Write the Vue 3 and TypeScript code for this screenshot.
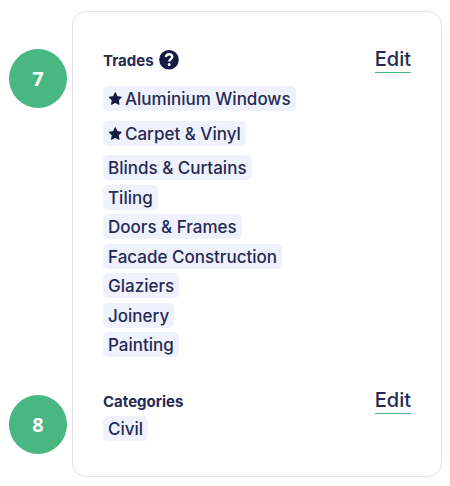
<script setup lang="ts">
interface Tag {
  label: string
  starred?: boolean
}

interface Section {
  id: string
  title: string
  help?: boolean
  tags: Tag[]
}

const steps: number[] = [7, 8]

const sections: Section[] = [
  {
    id: 'trades',
    title: 'Trades',
    help: true,
    tags: [
      { label: 'Aluminium Windows', starred: true },
      { label: 'Carpet & Vinyl', starred: true },
      { label: 'Blinds & Curtains' },
      { label: 'Tiling' },
      { label: 'Doors & Frames' },
      { label: 'Facade Construction' },
      { label: 'Glaziers' },
      { label: 'Joinery' },
      { label: 'Painting' },
    ],
  },
  { id: 'categories', title: 'Categories', tags: [{ label: 'Civil' }] },
]
</script>

<template>
  <main class="page">
    <div class="steps">
      <span v-for="step in steps" :key="step" class="step">{{ step }}</span>
    </div>
    <div class="card">
      <section v-for="section in sections" :key="section.id" class="section" :class="section.id">
        <header class="head">
          <h2 class="title">{{ section.title }}</h2>
          <button v-if="section.help" type="button" class="help">
            <svg viewBox="0 0 20 20" width="20" height="20" aria-hidden="true">
              <circle cx="10" cy="9.8" r="9.8" fill="#161b45" />
              <path
                d="M6.9 7.2C7.1 5.2 8.3 4.2 10.1 4.2c1.8 0 3.1 1 3.1 2.6 0 2.4-2.9 2.3-2.9 4.6"
                fill="none"
                stroke="#fff"
                stroke-width="2.4"
              />
              <circle cx="10.2" cy="14.4" r="1.5" fill="#fff" />
            </svg>
          </button>
          <a href="#" class="edit">Edit</a>
        </header>
        <ul class="tags">
          <li v-for="tag in section.tags" :key="tag.label" class="tag" :class="{ starred: tag.starred }">
            <svg v-if="tag.starred" class="star" viewBox="-1 0 25 25" width="14" height="14" aria-hidden="true">
              <path
                d="M12 1.5l3.2 6.8 7.4 1-5.4 5.2 1.4 7.4L12 18.3l-6.6 3.6 1.4-7.4L1.4 9.3l7.4-1z"
                fill="#161b45"
                stroke="#161b45"
                stroke-width="2"
                stroke-linejoin="round"
              />
            </svg>
            {{ tag.label }}
          </li>
        </ul>
      </section>
    </div>
  </main>
</template>

<style>
body {
  margin: 0;
  background: #fff;
}
</style>

<style scoped>
.page {
  box-sizing: border-box;
  display: flex;
  gap: 5px;
  min-height: 100vh;
  padding: 11px 8px 9px 9px;
  font-family: Inter, 'Liberation Sans', sans-serif;
  color: #252a54;
}

.steps {
  display: flex;
  flex-direction: column;
  justify-content: space-between;
  padding: 38px 0 23px;
}

.step {
  display: flex;
  align-items: center;
  justify-content: center;
  width: 58px;
  height: 59px;
  border-radius: 50%;
  background: #48b782;
  color: #fff;
  font-family: 'Noto Sans', 'Open Sans', sans-serif;
  font-size: 20px;
  font-weight: 700;
}

.card {
  box-sizing: border-box;
  display: flex;
  flex: 1;
  flex-direction: column;
  gap: 31px;
  padding: 35px 30px;
  border: 1px solid #e2e2e2;
  border-radius: 14px;
}

.section {
  display: flex;
  flex-direction: column;
}

.trades {
  flex: 1;
  gap: 13px;
}

.categories {
  gap: 2px;
}

.head {
  display: flex;
  align-items: center;
  gap: 5px;
}

.title {
  margin: 0;
  padding-top: 2px;
  font-size: 15px;
  font-weight: 700;
  line-height: 24px;
}

.help {
  display: flex;
  padding: 0;
  border: 0;
  background: none;
}

.edit {
  margin-left: auto;
  padding-bottom: 1px;
  border-bottom: 1px solid #48b782;
  color: inherit;
  font-size: 20px;
  font-weight: 500;
  line-height: 24px;
  text-decoration: none;
}

.tags {
  display: flex;
  flex: 1;
  flex-direction: column;
  align-items: flex-start;
  justify-content: space-between;
  margin: 0;
  padding: 0;
  list-style: none;
}

.tag {
  display: flex;
  align-items: center;
  gap: 3px;
  padding: 1px 5px 0;
  border-radius: 5px;
  background: #eff1fd;
  font-size: 17px;
  font-weight: 500;
  line-height: 24px;
}

.starred {
  margin-bottom: 5px;
}
</style>
